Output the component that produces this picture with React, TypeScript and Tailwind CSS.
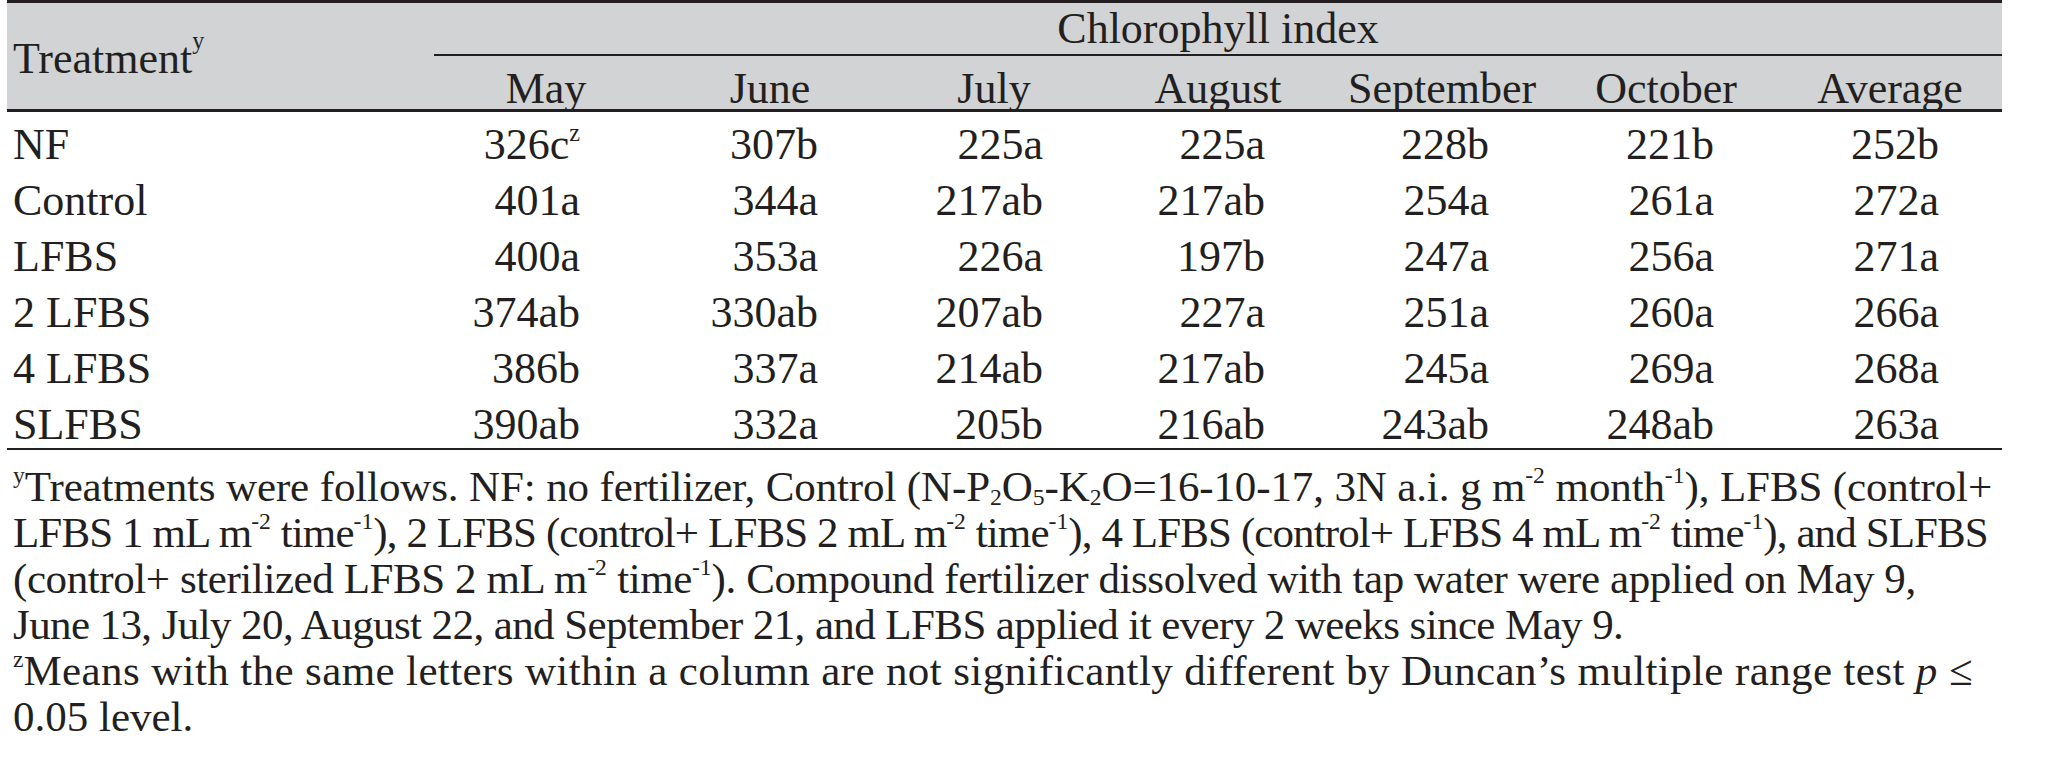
const months = ["May", "June", "July", "August", "September", "October", "Average"];

// right padding per data column, values are right aligned
const pads = ["pr-[78px]", "pr-[64px]", "pr-[63px]", "pr-[65px]", "pr-[65px]", "pr-[64px]", "pr-[63px]"];

const rows: [string, string[]][] = [
  ["NF", ["326c", "307b", "225a", "225a", "228b", "221b", "252b"]],
  ["Control", ["401a", "344a", "217ab", "217ab", "254a", "261a", "272a"]],
  ["LFBS", ["400a", "353a", "226a", "197b", "247a", "256a", "271a"]],
  ["2 LFBS", ["374ab", "330ab", "207ab", "227a", "251a", "260a", "266a"]],
  ["4 LFBS", ["386b", "337a", "214ab", "217ab", "245a", "269a", "268a"]],
  ["SLFBS", ["390ab", "332a", "205b", "216ab", "243ab", "248ab", "263a"]],
];

function Sup({ children }: { children: React.ReactNode }) {
  return <sup className="relative -top-[0.75em] align-baseline text-[0.55em] leading-none tracking-normal">{children}</sup>;
}

function Sub({ children }: { children: React.ReactNode }) {
  return <sub className="relative top-[0.15em] align-baseline text-[0.55em] leading-none tracking-normal">{children}</sub>;
}

export default function App() {
  return (
    <div className="h-[762px] w-[2055px] overflow-hidden bg-white text-[44px] text-[#231f20] [font-family:'Liberation_Serif',serif]">
      <div className="ml-[7px] w-[1995px]">
        {/* Header */}
        <div className="flex border-y-[3px] border-[#231f20] bg-[#d1d3d4]">
          <div className="flex w-[427px] items-center pl-[6px] pt-[6px]">
            Treatment<Sup>y</Sup>
          </div>
          <div className="flex flex-1 flex-col">
            <div className="flex h-[53px] items-center justify-center border-b-2 border-[#231f20]">
              Chlorophyll index
            </div>
            <div className="grid h-[53px] grid-cols-7 items-center pb-[7px] text-center">
              {months.map((m) => (
                <div key={m}>{m}</div>
              ))}
            </div>
          </div>
        </div>

        {/* Body */}
        <div className="border-b-2 border-[#231f20]">
          {rows.map(([name, vals]) => (
            <div key={name} className="grid h-[56px] grid-cols-[427px_repeat(7,224px)] items-center pb-[8px]">
              <div className="pl-[6px]">{name}</div>
              {vals.map((v, i) => (
                <div key={i} className={`text-right ${pads[i]}`}>
                  {v}
                  {name === "NF" && i === 0 && <Sup>z</Sup>}
                </div>
              ))}
            </div>
          ))}
        </div>

        {/* Footnotes */}
        <div className="mt-[14px] whitespace-nowrap pl-[6px] text-[43px] leading-[46px]">
          <div className="tracking-[-0.13px]">
            <Sup>y</Sup>Treatments were follows. NF: no fertilizer, Control (N-P<Sub>2</Sub>O<Sub>5</Sub>-K<Sub>2</Sub>O=16-10-17, 3N a.i. g m<Sup>-2</Sup> month<Sup>-1</Sup>), LFBS (control+
          </div>
          <div className="tracking-[-0.9px]">
            LFBS 1 mL m<Sup>-2</Sup> time<Sup>-1</Sup>), 2 LFBS (control+ LFBS 2 mL m<Sup>-2</Sup> time<Sup>-1</Sup>), 4 LFBS (control+ LFBS 4 mL m<Sup>-2</Sup> time<Sup>-1</Sup>), and SLFBS
          </div>
          <div className="tracking-[-0.42px]">
            (control+ sterilized LFBS 2 mL m<Sup>-2</Sup> time<Sup>-1</Sup>). Compound fertilizer dissolved with tap water were applied on May 9,
          </div>
          <div className="tracking-[-0.6px]">June 13, July 20, August 22, and September 21, and LFBS applied it every 2 weeks since May 9.</div>
          <div className="tracking-[0.38px]">
            <Sup>z</Sup>Means with the same letters within a column are not significantly different by Duncan’s multiple range test <i>p</i> ≤
          </div>
          <div>0.05 level.</div>
        </div>
      </div>
    </div>
  );
}
